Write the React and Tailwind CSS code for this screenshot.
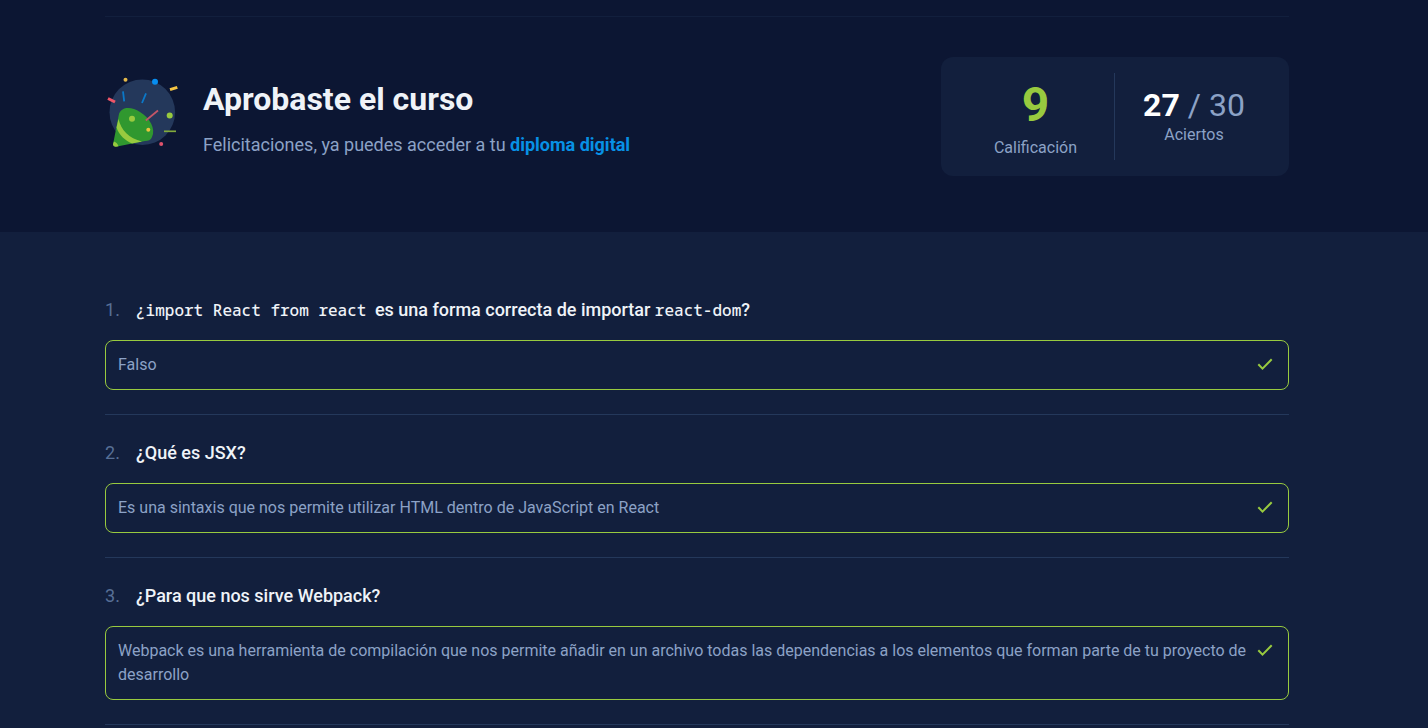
const questions = [
  {
    title: (
      <>
        <code className="pr-1 font-['Noto_Sans_Mono','DejaVu_Sans_Mono',monospace] text-base">¿import React from react</code>
        {' es una forma correcta de importar '}
        <code className="font-['Noto_Sans_Mono','DejaVu_Sans_Mono',monospace] text-base">react-dom</code>?
      </>
    ),
    answer: 'Falso',
  },
  {
    title: '¿Qué es JSX?',
    answer: 'Es una sintaxis que nos permite utilizar HTML dentro de JavaScript en React',
  },
  {
    title: '¿Para que nos sirve Webpack?',
    answer:
      'Webpack es una herramienta de compilación que nos permite añadir en un archivo todas las dependencias a los elementos que forman parte de tu proyecto de desarrollo',
  },
];

function PartyIcon() {
  return (
    <svg className="size-[84px] shrink-0" viewBox="0 0 84 84" fill="none" aria-hidden="true">
      <circle cx="37.3" cy="37.3" r="32.8" fill="#24385b" />
      <path d="M14 39C17 31 27 32 35 37C45 43 51 54 47 62C46 65 43 66 40 66L12 71.5C9.500 72 7.800 70.500 8.300 68Z" fill="#30982f" />
      <path d="M13.500 44C16 55 24 63.500 37 66.500L27 68.500C20 65.500 14 60 11.500 52.500Z" fill="#98ca3f" />
      <path d="M9 66.500C11 67 13 69 13.500 71.300C10 72.500 7 71 8.400 68Z" fill="#98ca3f" />
      <path d="M18 16.300L19.200 26.300M41 18.300L37 28" stroke="#0b78c8" strokeWidth="1.800" />
      <path d="M40.800 45.500L53 35.500" stroke="#c35668" strokeWidth="1.700" />
      <path d="M3 23.500L10 27" stroke="#ef5668" strokeWidth="3" />
      <path d="M65 14.700L72.300 12.300" stroke="#f5c443" strokeWidth="3" />
      <path d="M59 56.300H71" stroke="#82aa3d" strokeWidth="1.700" />
      <circle cx="20.500" cy="4.700" r="2" fill="#e4b84a" />
      <circle cx="50" cy="6.700" r="3" fill="#078df0" />
      <circle cx="64.700" cy="40.500" r="3" fill="#98ca3f" />
      <circle cx="27" cy="43.700" r="3" fill="#98ca3f" />
      <circle cx="43.300" cy="54.700" r="2" fill="#e9c43f" />
      <circle cx="56.200" cy="69" r="2" fill="#df526c" />
    </svg>
  );
}

function CheckIcon() {
  return (
    <svg className="size-6 shrink-0" viewBox="0 0 24 24" fill="none" role="img" aria-label="Correcta">
      <path d="M5.300 11.200L9.500 15.600L18.700 6.300" stroke="#98ca3f" strokeWidth="2" />
    </svg>
  );
}

export default function App() {
  return (
    <div className="min-h-screen bg-[#121f3d] font-[Roboto,sans-serif]">
      <header className="bg-[#0c1633] pt-4 pr-[34px] pb-14">
        <div className="mx-auto max-w-[1184px] border-t border-[#121f3d] pt-10">
          <div className="flex items-center justify-between">
            <div className="flex items-center gap-3.5">
              <PartyIcon />
              <div className="pt-1">
                <h1 className="text-[32px] leading-10 font-bold text-[#eff3f8]">Aprobaste el curso</h1>
                <p className="mt-3 text-lg leading-7 text-[#8ca2c6]">
                  Felicitaciones, ya puedes acceder a tu{' '}
                  <a href="#diploma" className="font-bold text-[#0791e6]">diploma digital</a>
                </p>
              </div>
            </div>
            <div className="grid w-[348px] grid-cols-2 rounded-xl bg-[#121f3d] p-4 text-center text-[#8ca2c6]">
              <div className="border-r border-[#24385b]">
                <p className="text-5xl leading-[63px] font-bold text-[#98ca3f]">9</p>
                <p>Calificación</p>
              </div>
              <div className="pt-4">
                <p className="text-[32px] leading-8">
                  <span className="font-bold text-white">27</span> / 30
                </p>
                <p className="mt-0.5">Aciertos</p>
              </div>
            </div>
          </div>
        </div>
      </header>
      <main className="pt-10 pr-[34px]">
        <ol className="mx-auto max-w-[1184px]">
          {questions.map((q, i) => (
            <li key={q.answer} className="border-b border-[#24385b] py-6">
              <div className="flex text-lg leading-7">
                <span className="w-[31px] shrink-0 text-[#576f96]">{i + 1}.</span>
                <h2 className="font-medium text-[#eff3f8]">{q.title}</h2>
              </div>
              <div className="mt-4 flex items-start gap-1 rounded-lg border border-[#98ca3f] py-3 pr-[11px] pl-3">
                <p className="flex-1 text-[#8ca2c6]">{q.answer}</p>
                <CheckIcon />
              </div>
            </li>
          ))}
        </ol>
      </main>
    </div>
  );
}
